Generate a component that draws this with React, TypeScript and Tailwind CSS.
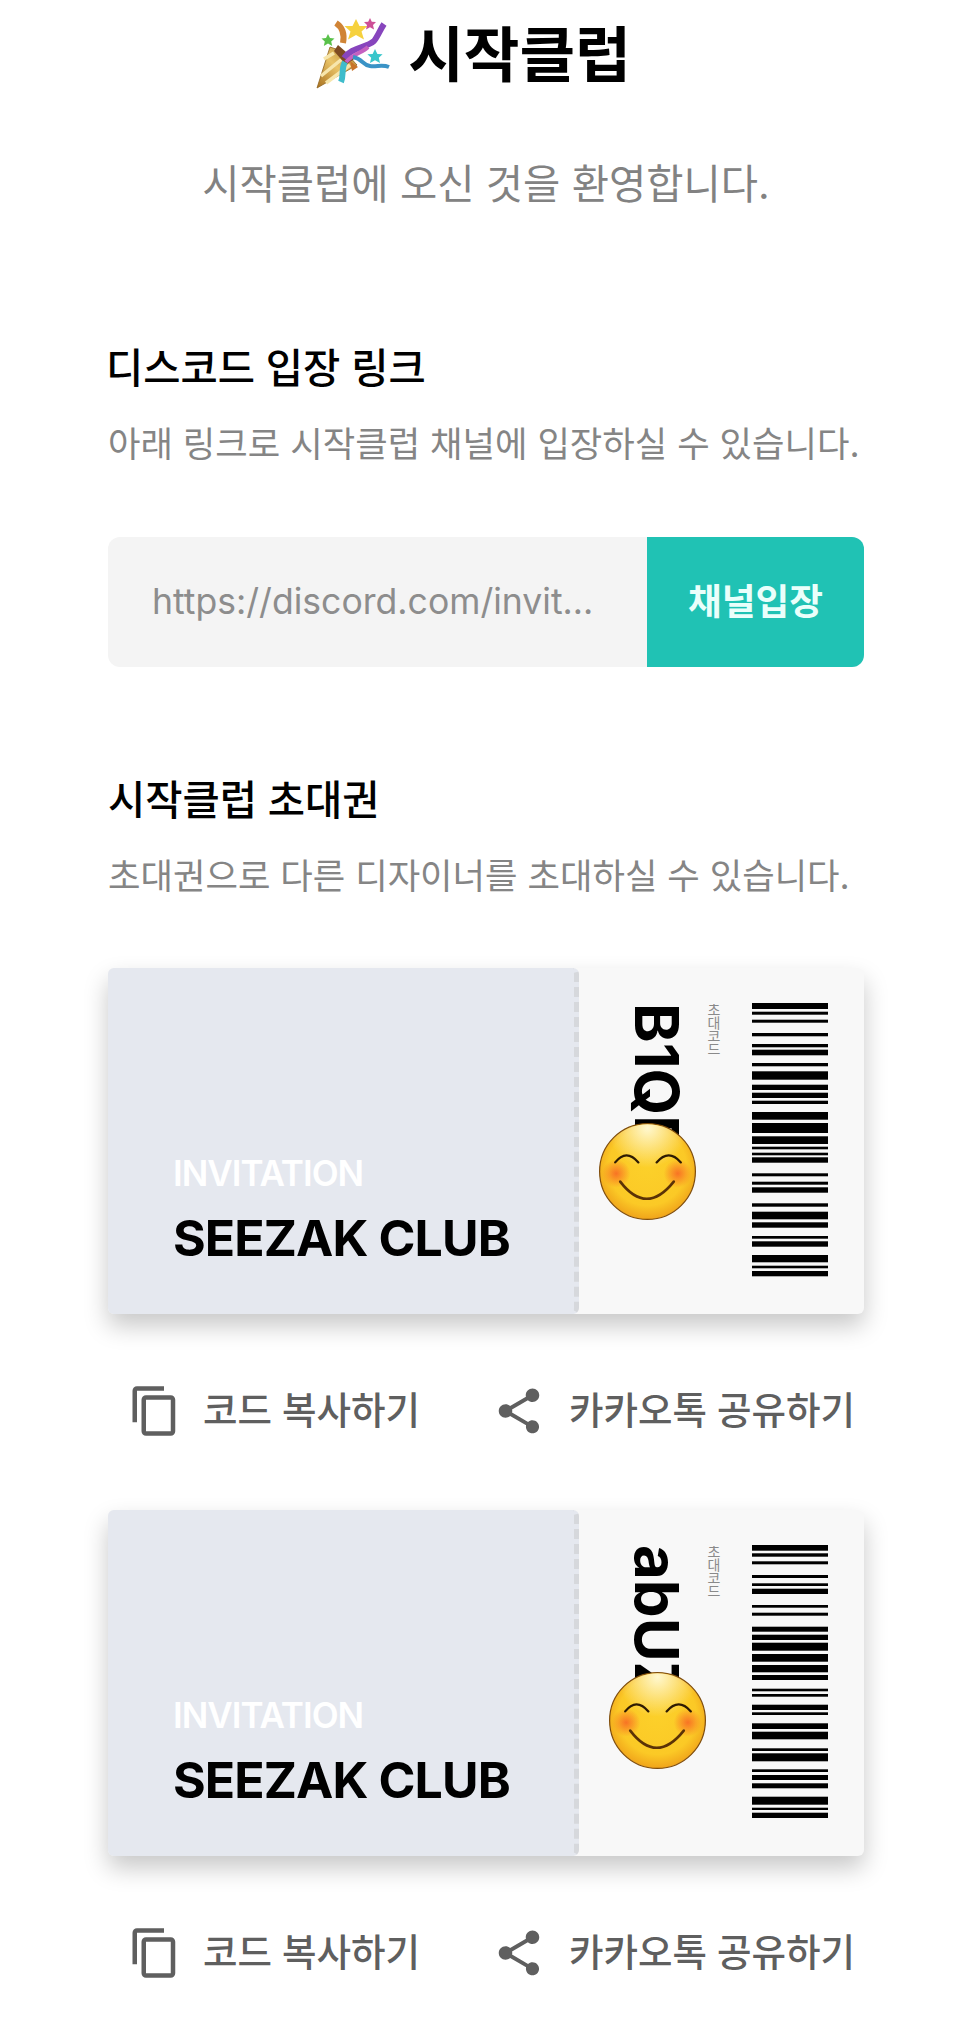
import React from 'react';
import { MdOutlineContentCopy, MdShare } from 'react-icons/md';

// barcode stripes as [start, end] in px from the top of the code
const barsA: number[][] = [
  [0, 6], [8.7, 11.7], [16.7, 19.7], [30, 33.3], [41, 44.3], [46.7, 52.3], [60, 63.3], [68.3, 76.7],
  [81.7, 87], [89.7, 95], [97.7, 101], [109, 116.7], [120, 130], [133.3, 141], [143.7, 146.3], [149.7, 152.3],
  [154.3, 159.7], [170.3, 173.3], [178.7, 181.7], [184.3, 189.7], [200.3, 203.7], [208.7, 216.3], [219.3, 224.7],
  [233, 235.7], [238.3, 243.7], [252, 259.3], [262.7, 265.3], [268, 273.3],
];

const barsB: number[][] = [
  [0, 5.7], [8.3, 11.7], [16.3, 19.3], [30, 33], [38.3, 41], [43.7, 49], [60, 62.7], [67.7, 70.7],
  [81.7, 86.7], [89.7, 95], [97.7, 105.7], [109, 116.7], [120, 127.3], [130, 135], [143.7, 146.3], [149, 151.7],
  [159.7, 165], [167.3, 170], [178.3, 184], [186.7, 194.3], [203.3, 206], [208.3, 216.3], [224.3, 227],
  [230, 235], [238.3, 243.3], [251.7, 259.7], [262.7, 265], [267.7, 273],
];

const Barcode = ({ bars }: { bars: number[][] }) => (
  <svg width="76" height="274" viewBox="0 0 76 274" className="shrink-0">
    {bars.map(([a, b]) => (
      <rect key={a} x="0" y={a} width="76" height={b - a} fill="#000" />
    ))}
  </svg>
);

const Smile = ({ id }: { id: string }) => (
  <svg width="97" height="97" viewBox="0 0 96 96">
    <defs>
      <radialGradient id={`${id}-face`} cx="0.5" cy="0.45" r="0.58">
        <stop offset="0" stopColor="#fcd02a" />
        <stop offset="0.7" stopColor="#fbc926" />
        <stop offset="1" stopColor="#ee9c18" />
      </radialGradient>
      <radialGradient id={`${id}-shine`} cx="0.5" cy="0.04" r="0.42">
        <stop offset="0" stopColor="#fff8cf" stopOpacity="1" />
        <stop offset="1" stopColor="#fff8cf" stopOpacity="0" />
      </radialGradient>
      <radialGradient id={`${id}-cheek`}>
        <stop offset="0" stopColor="#f86f24" stopOpacity="0.95" />
        <stop offset="1" stopColor="#f86f24" stopOpacity="0" />
      </radialGradient>
    </defs>
    <circle cx="48" cy="48" r="47.4" fill={`url(#${id}-face)`} stroke="#7f4d0c" strokeWidth="1.2" />
    <circle cx="48" cy="48" r="46.8" fill={`url(#${id}-shine)`} />
    <circle cx="17" cy="50" r="14" fill={`url(#${id}-cheek)`} />
    <circle cx="78" cy="50" r="14" fill={`url(#${id}-cheek)`} />
    <path d="M16 39 Q27 25 39 39" fill="none" stroke="#2e1b03" strokeWidth="2.2" strokeLinecap="round" />
    <path d="M57 39 Q69 25 81 39" fill="none" stroke="#2e1b03" strokeWidth="2.2" strokeLinecap="round" />
    <path d="M21 58 Q47 92 74 58" fill="none" stroke="#5b3206" strokeWidth="2.6" strokeLinecap="round" />
  </svg>
);

const Popper = () => (
  <svg width="100" height="80" viewBox="0 0 100 80" className="shrink-0">
    <defs>
      <linearGradient id="cone" x1="0" y1="1" x2="1" y2="0">
        <stop offset="0" stopColor="#a8701d" />
        <stop offset="0.5" stopColor="#eac468" />
        <stop offset="1" stopColor="#a97a2c" />
      </linearGradient>
    </defs>
    <path d="M28 8 C34 12 37 18 35 28" fill="none" stroke="#d08436" strokeWidth="6" />
    <path d="M9 73 L22 32 Q38 36 49 50 Z" fill="url(#cone)" stroke="#8f6420" strokeWidth="0.8" />
    <path d="M13 61 L34 44 M18 68 L42 50 M16 44 L26 38" stroke="#f7e6ac" strokeWidth="3.5" fill="none" />
    <path d="M30 30 L46 44 L38 50 L26 36 Z" fill="#7d4a22" />
    <path d="M36 43 C44 32 58 33 66 26 C70 21 72 15 76 9" fill="none" stroke="#8745bd" strokeWidth="6" />
    <path d="M38 47 C46 38 54 38 60 32" fill="none" stroke="#c561c0" strokeWidth="4" />
    <path d="M37 47 C33 54 36 60 33 67" fill="none" stroke="#3fbccb" strokeWidth="6" />
    <path d="M42 46 L50 52 L44 56 Z" fill="#c8742a" />
    <path d="M45 42 C55 44 54 50 62 51 C69 52 74 49 81 52" fill="none" stroke="#3a93c6" strokeWidth="4" />
    <path d="M48 4 L51.5 11 L59.5 11 L53.5 16.5 L56 24.5 L48 20 L40 24.5 L42.5 16.5 L36.5 11 L44.5 11 Z" fill="#f6d13e" />
    <path d="M62 3 L63.8 6.8 L68 7 L65 10 L66 14.5 L62 12.3 L58 14.5 L59 10 L56 7 L60.2 6.8 Z" fill="#cd4f97" />
    <path d="M20 19 L22 23 L26.5 23.4 L23.2 26.4 L24.2 31 L20 28.6 L15.8 31 L16.8 26.4 L13.5 23.4 L18 23 Z" fill="#59c14a" />
    <path d="M67 34 L69.4 39 L74.6 39.2 L70.8 42.8 L72 48 L67 45.2 L62 48 L63.2 42.8 L59.4 39.2 L64.6 39 Z" fill="#39c6cb" />
  </svg>
);

const Ticket = ({ code, bars, smileId, smilePos }: { code: string; bars: number[][]; smileId: string; smilePos: string }) => (
  <div className="relative flex h-[346px] rounded-md bg-[#f8f8f8] shadow-[0_12px_24px_rgba(0,0,0,0.22)]">
    <div className="flex w-[471px] shrink-0 flex-col rounded-md border-r-[5px] border-dashed border-[#d6d8dc] bg-[#e5e8ef] pl-[65px] pt-[180px]">
      <div className="text-[35px] font-semibold leading-[50px] tracking-[-1px] text-white">INVITATION</div>
      <div className="mt-[10px] text-[50px] font-bold leading-[60px] tracking-[-0.9px] text-black">SEEZAK CLUB</div>
    </div>
    <div className="flex flex-1 items-start pl-[48px] pt-[35px]">
      <div className="h-[270px] whitespace-nowrap text-[60px] font-bold leading-[60px] text-black [writing-mode:vertical-rl]">
        {code}
      </div>
      <div className="ml-[19px] text-[14px] leading-[14px] tracking-[-1px] text-[#8a8a8a] [writing-mode:vertical-rl]">초대코드</div>
      <div className="ml-[32px]">
        <Barcode bars={bars} />
      </div>
    </div>
    <div className={`absolute ${smilePos}`}>
      <Smile id={smileId} />
    </div>
  </div>
);

const Actions = () => (
  <div className="flex h-[60px] items-center justify-between pl-[20px] pr-[9px] text-[37.5px] font-medium leading-[60px] text-[#5f5f5f]">
    <div className="flex items-center gap-[21px]">
      <MdOutlineContentCopy size={54} />
      <span>코드 복사하기</span>
    </div>
    <div className="flex items-center gap-[23px]">
      <MdShare size={54} />
      <span>카카오톡 공유하기</span>
    </div>
  </div>
);

export default function App() {
  return (
    <div className="h-[2018px] w-[972px] overflow-hidden bg-white font-[family-name:Inter,'Noto_Sans_CJK_KR',sans-serif]">
      <div className="flex h-[110px] items-center justify-center pr-[33px]">
        <Popper />
        <h1 className="text-[60.5px] font-bold leading-[110px] text-black">시작클럽</h1>
      </div>
      <p className="mt-[45px] text-center text-[40.5px] leading-[60px] text-[#828282]">시작클럽에 오신 것을 환영합니다.</p>

      <div className="px-[108px]">
        <h2 className="-ml-[2px] mt-[124px] text-[40.5px] font-medium leading-[60px] text-black">디스코드 입장 링크</h2>
        <p className="mt-[21px] whitespace-nowrap text-[35.3px] leading-[50px] text-[#858585]">아래 링크로 시작클럽 채널에 입장하실 수 있습니다.</p>

        <div className="mt-[67px] flex h-[130px] overflow-hidden rounded-xl bg-[#f4f4f4]">
          <div className="flex flex-1 items-center pl-[44px] text-[35.6px] text-[#8d8d8d]">https://discord.com/invit...</div>
          <div className="flex w-[217px] items-center justify-center bg-[#20c2b4] text-[36.7px] font-semibold text-[#eafffb]">채널입장</div>
        </div>

        <h2 className="mt-[104px] text-[40.5px] font-medium leading-[60px] text-black">시작클럽 초대권</h2>
        <p className="mt-[21px] whitespace-nowrap text-[35.3px] leading-[50px] text-[#858585]">초대권으로 다른 디자이너를 초대하실 수 있습니다.</p>

        <div className="mt-[66px]">
          <Ticket code="B1QEs" bars={barsA} smileId="s1" smilePos="left-[491px] top-[155px]" />
        </div>
        <div className="mt-[67px]">
          <Actions />
        </div>
        <div className="mt-[69px]">
          <Ticket code="abUZx" bars={barsB} smileId="s2" smilePos="left-[501px] top-[162px]" />
        </div>
        <div className="mt-[67px]">
          <Actions />
        </div>
      </div>
    </div>
  );
}
